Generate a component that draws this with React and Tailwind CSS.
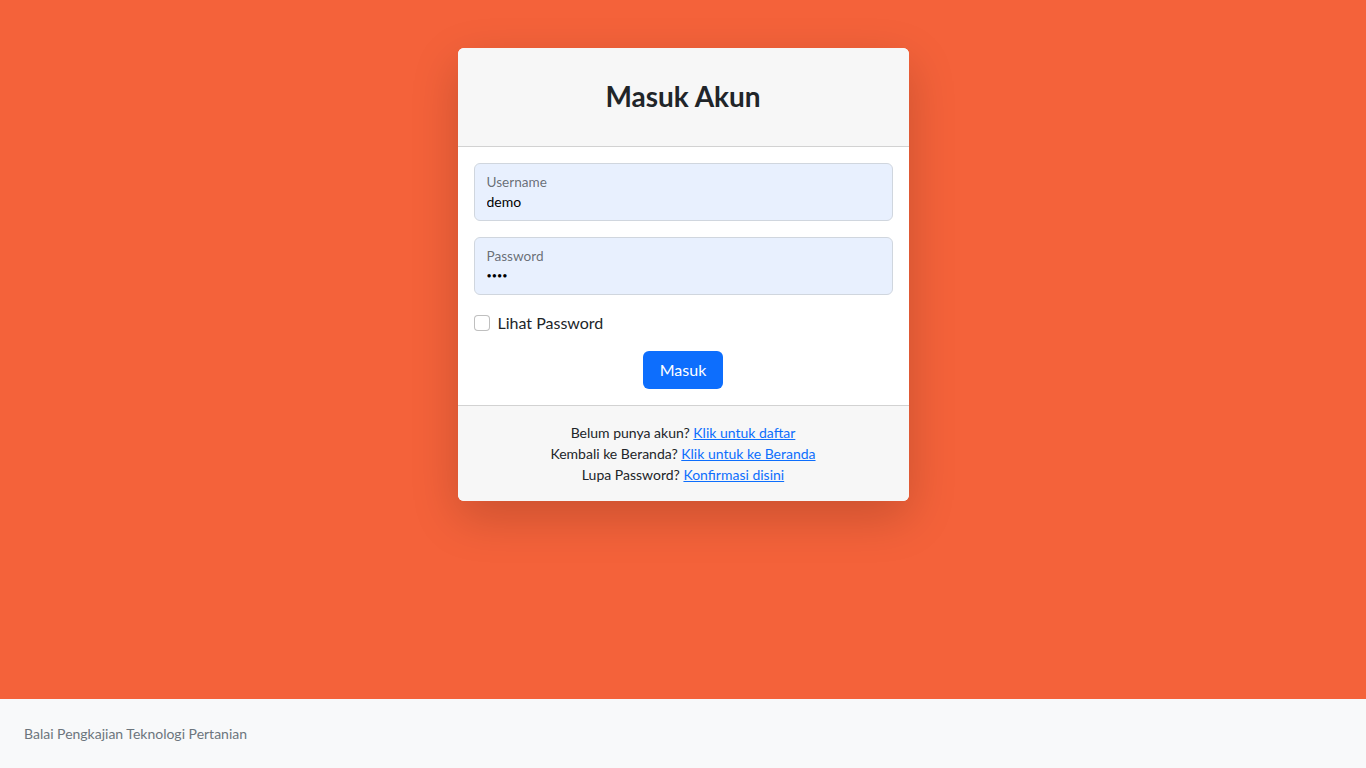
export default function App() {
  return (
    <div
      className="min-h-screen flex flex-col bg-[#f4623a] text-[#212529]"
      style={{ fontFamily: 'Lato, "Open Sans", sans-serif' }}
    >
      <main className="flex-1 flex justify-center">
        <div className="mt-12 w-[451px] self-start rounded-md bg-white shadow-[0_16px_48px_rgba(0,0,0,0.175)] overflow-hidden">
          <div className="bg-[#f7f7f7] border-b border-black/15 px-4 py-2">
            <h3 className="my-6 text-center text-[28px] leading-[1.2] font-bold">Masuk Akun</h3>
          </div>

          <form className="p-4" onSubmit={(e) => e.preventDefault()}>
            <div className="mb-4 relative">
              <label className="absolute left-[13px] top-[9px] text-[13.6px] text-[#212529]/65">Username</label>
              <input
                type="text"
                defaultValue="demo"
                className="block w-full h-[58px] rounded-md border border-[#d0d6de] bg-[#e8f0fe] px-3 pt-[26px] pb-[6px] text-[14px] text-black outline-none"
              />
            </div>
            <div className="mb-4 relative">
              <label className="absolute left-[13px] top-[9px] text-[13.6px] text-[#212529]/65">Password</label>
              <input
                type="password"
                defaultValue="demo"
                className="block w-full h-[58px] rounded-md border border-[#d0d6de] bg-[#e8f0fe] px-3 pt-[28px] pb-[8px] text-[9px] text-black outline-none"
              />
            </div>

            <div className="mb-4 flex items-center min-h-6 gap-2">
              <input type="checkbox" className="appearance-none w-4 h-4 rounded border border-black/25 bg-white" />
              <label className="text-base">Lihat Password</label>
            </div>

            <div className="flex justify-center">
              <button
                type="submit"
                className="h-[38px] w-20 rounded-md bg-[#0d6efd] text-white text-base"
              >
                Masuk
              </button>
            </div>
          </form>

          <div className="bg-[#f7f7f7] border-t border-black/15 px-4 py-4 text-center text-sm leading-[21px]">
            <div>
              Belum punya akun? <a href="#" className="text-[#0d6efd] underline">Klik untuk daftar</a>
            </div>
            <div>
              Kembali ke Beranda? <a href="#" className="text-[#0d6efd] underline">Klik untuk ke Beranda</a>
            </div>
            <div>
              Lupa Password? <a href="#" className="text-[#0d6efd] underline">Konfirmasi disini</a>
            </div>
          </div>
        </div>
      </main>

      <footer className="bg-[#f8f9fa] px-6 py-6 text-sm leading-[21px] text-[#6c757d]">
        Balai Pengkajian Teknologi Pertanian
      </footer>
    </div>
  );
}
